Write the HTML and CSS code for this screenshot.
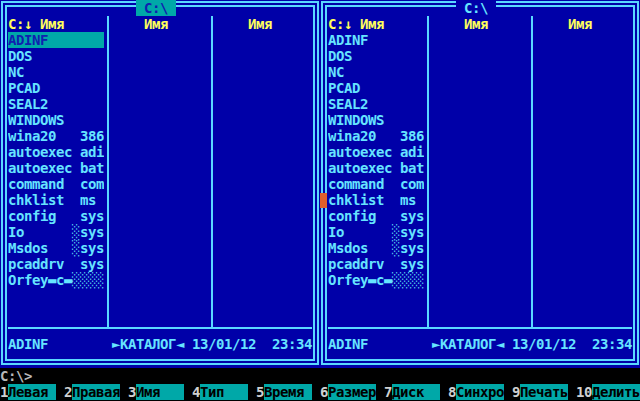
FILE: index.html
```html
<!DOCTYPE html>
<html lang="ru">
<head>
  <meta charset="UTF-8">
  <title>Norton Commander</title>
  <link rel="stylesheet" href="styles.css">
</head>
<body>
  <div class="screen">
    <div class="panels">

      <div class="panel">
        <div class="title active"> C:\ </div>
        <div class="frame">
          <div class="cols">
            <div class="col">
              <div class="hdr">C:↓ Имя</div>
              <div class="sel">ADINF</div>
              <div>DOS</div>
              <div>NC</div>
              <div>PCAD</div>
              <div>SEAL2</div>
              <div>WINDOWS</div>
              <div>wina20   386</div>
              <div>autoexec adi</div>
              <div>autoexec bat</div>
              <div>command  com</div>
              <div>chklist  ms</div>
              <div>config   sys</div>
              <div>Io      <span class="shade">░</span>sys</div>
              <div>Msdos   <span class="shade">░</span>sys</div>
              <div>pcaddrv  sys</div>
              <div>Orfey▬c▬<span class="shade">░░░░</span></div>
            </div>
            <div class="sep"></div>
            <div class="col"><div class="hdr">    Имя</div></div>
            <div class="sep"></div>
            <div class="col"><div class="hdr">    Имя</div></div>
          </div>
          <div class="status">ADINF        ►КАТАЛОГ◄ 13/01/12  23:34</div>
        </div>
      </div>

      <div class="panel">
        <div class="title"> C:\ </div>
        <div class="frame">
          <div class="cols">
            <div class="col">
              <div class="hdr">C:↓ Имя</div>
              <div>ADINF</div>
              <div>DOS</div>
              <div>NC</div>
              <div>PCAD</div>
              <div>SEAL2</div>
              <div>WINDOWS</div>
              <div>wina20   386</div>
              <div>autoexec adi</div>
              <div>autoexec bat</div>
              <div>command  com</div>
              <div>chklist  ms</div>
              <div>config   sys</div>
              <div>Io      <span class="shade">░</span>sys</div>
              <div>Msdos   <span class="shade">░</span>sys</div>
              <div>pcaddrv  sys</div>
              <div>Orfey▬c▬<span class="shade">░░░░</span></div>
            </div>
            <div class="sep"></div>
            <div class="col"><div class="hdr">    Имя</div></div>
            <div class="sep"></div>
            <div class="col"><div class="hdr">    Имя</div></div>
          </div>
          <div class="status">ADINF        ►КАТАЛОГ◄ 13/01/12  23:34</div>
        </div>
      </div>

    </div>

    <div class="cmd">C:\&gt;</div>

    <div class="keys">
      <div class="key"><span class="num">1</span><span class="lbl">Левая</span></div>
      <div class="key"><span class="num">2</span><span class="lbl">Правая</span></div>
      <div class="key"><span class="num">3</span><span class="lbl">Имя</span></div>
      <div class="key"><span class="num">4</span><span class="lbl">Тип</span></div>
      <div class="key"><span class="num">5</span><span class="lbl">Время</span></div>
      <div class="key"><span class="num">6</span><span class="lbl">Размер</span></div>
      <div class="key"><span class="num">7</span><span class="lbl">Диск</span></div>
      <div class="key"><span class="num">8</span><span class="lbl">Синхро</span></div>
      <div class="key"><span class="num">9</span><span class="lbl">Печать</span></div>
      <div class="key"><span class="num wide">10</span><span class="lbl">Делить</span></div>
    </div>

    <div class="mouse"></div>
  </div>
</body>
</html>
```

FILE: styles.css
```css
body {
  margin: 0;
  background: #000;
  font-family: "DejaVu Sans Mono", "Liberation Mono", monospace;
  font-weight: bold;
  font-size: 14px;
  letter-spacing: -0.43px;
  line-height: 16px;
}
.screen {
  position: relative;
  width: 640px;
  height: 401px;
  background: #000;
  overflow: hidden;
}
.panels {
  display: flex;
  height: 368px;
  background: #0000a8;
}
.panel {
  position: relative;
  width: 320px;
  height: 368px;
}
.frame {
  margin: 1px;
  width: 304px;
  height: 336px;
  padding: 9px 1px 7px 1px;
  border: 6px double #5ad8ff;
  color: #66e4ff;
}
.title {
  position: absolute;
  left: 136px;
  top: 0;
  width: 40px;
  height: 16px;
  white-space: pre;
  background: #0000a8;
  color: #66e4ff;
}
.title.active {
  background: #00a8a8;
  color: #1020b0;
}
.cols {
  display: flex;
  height: 311px;
  border-bottom: 2px solid #5ad8ff;
}
.col {
  width: 96px;
  overflow: hidden;
}
.col > div {
  height: 16px;
  white-space: pre;
}
.hdr { color: #ffff5a; }
.sel {
  background: #00a8a8;
  color: #1020b0;
}
.shade { color: #5ad0f0; font-weight: normal; }
.sep {
  position: relative;
  width: 8px;
}
.sep::before {
  content: "";
  position: absolute;
  left: 3px;
  top: 0;
  bottom: 0;
  width: 2px;
  background: #5ad8ff;
}
.status {
  margin-top: 7px;
  height: 16px;
  white-space: pre;
}
.cmd {
  height: 16px;
  color: #b8b8b8;
  white-space: pre;
}
.keys {
  display: flex;
  height: 16px;
}
.key {
  display: flex;
  width: 64px;
}
.num {
  width: 8px;
  color: #d0d0d0;
  white-space: pre;
}
.num.wide { width: 16px; }
.lbl {
  width: 48px;
  background: #00a8a8;
  color: #000;
  white-space: pre;
  overflow: hidden;
}
.mouse {
  position: absolute;
  left: 320px;
  top: 193px;
  width: 7px;
  height: 15px;
  background: #e0602a;
}
```
